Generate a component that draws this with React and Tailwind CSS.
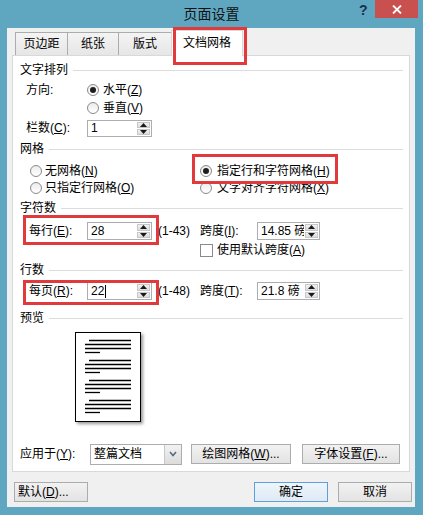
import React from "react";

const K = ({ k }) => <span className="underline">{k}</span>;

function Radio({ checked }) {
  return (
    <span className="flex h-[12px] w-[12px] shrink-0 items-center justify-center rounded-full border border-[#8a8a8a] bg-linear-to-b from-[#ececec] to-white">
      {checked && <span className="h-[6px] w-[6px] rounded-full bg-[#1e1e1e]" />}
    </span>
  );
}

function Check() {
  return <span className="h-[13px] w-[13px] shrink-0 border border-[#8a8a8a] bg-white" />;
}

function Group({ title }) {
  return (
    <div className="flex h-[16px] items-center pl-[7px] pr-[6px]">
      <span>{title}</span>
      <div className="ml-[5px] h-px flex-1 bg-[#dcdcdc]" />
    </div>
  );
}

function Spin({ w, h, children }) {
  return (
    <div className={`flex ${w} ${h} border border-[#abadb3] bg-white`}>
      <div className="flex flex-1 items-center overflow-hidden pl-[3px] whitespace-nowrap">{children}</div>
      <div className="flex w-[15px] flex-col gap-px bg-white p-px">
        <div className="flex flex-1 items-center justify-center border border-[#c8c8c8] bg-linear-to-b from-[#f2f2f2] to-[#dcdcdc]">
          <svg width="7" height="4" viewBox="0 0 7 4"><path d="M0 4 L3.5 0 L7 4 Z" fill="#1a1a1a" /></svg>
        </div>
        <div className="flex flex-1 items-center justify-center border border-[#c8c8c8] bg-linear-to-b from-[#f2f2f2] to-[#dcdcdc]">
          <svg width="7" height="4" viewBox="0 0 7 4"><path d="M0 0 L3.5 4 L7 0 Z" fill="#1a1a1a" /></svg>
        </div>
      </div>
    </div>
  );
}

function Btn({ w, h = "h-[20px]", def, children, extra = "" }) {
  return (
    <div
      className={`flex ${w} ${h} items-center justify-center border ${
        def ? "border-[#5f9fdc] from-[#eef5fc] to-[#dfeaf5]" : "border-[#acacac] from-[#f2f2f2] to-[#e3e3e3]"
      } bg-linear-to-b ${extra}`}
    >
      {children}
    </div>
  );
}

function Preview() {
  const groups = [8, 28, 48, 68];
  return (
    <div className="ml-[62px] mt-[6px] h-[90px] w-[66px] border border-black bg-white shadow-[2px_2px_3px_rgba(0,0,0,0.4)]">
      <svg width="64" height="88" viewBox="0 0 64 88">
        {groups.map((g) => (
          <g key={g} stroke="#000" strokeWidth="1.3">
            <line x1="13" y1={g - 0.5} x2="55" y2={g - 0.5} />
            <line x1="9" y1={g + 3.5} x2="55" y2={g + 3.5} />
            <line x1="9" y1={g + 7.5} x2="55" y2={g + 7.5} />
            <line x1="9" y1={g + 11.5} x2="24" y2={g + 11.5} />
          </g>
        ))}
      </svg>
    </div>
  );
}

export default function App() {
  return (
    <div className="relative flex h-[515px] w-[423px] flex-col overflow-hidden bg-[#5fa7c1] font-['Liberation_Sans','Noto_Sans_CJK_SC',sans-serif] text-[12px] leading-[16px] text-black">
      {/* title bar */}
      <div className="relative flex h-[28px] shrink-0 items-center justify-center">
        <span className="text-[14px] text-[#111]">页面设置</span>
        <div className="absolute left-[359px] top-[2px] text-[14px] font-bold text-[#1d2f4a]">?</div>
        <div className="absolute left-[375px] top-0 flex h-[18px] w-[43px] items-center justify-center bg-[#c8504e]">
          <svg width="10" height="9" viewBox="0 0 10 9">
            <path d="M1 0.5 L9 8.5 M9 0.5 L1 8.5" stroke="#fff" strokeWidth="1.8" />
          </svg>
        </div>
      </div>

      {/* body */}
      <div className="ml-[7px] flex h-[479px] w-[408px] flex-col bg-[#f0f0f0]">
        {/* tabs */}
        <div className="flex h-[27px] items-end pl-[8px]">
          <div className="flex h-[23px] w-[53px] items-center justify-center border border-b-0 border-[#acacac] bg-linear-to-b from-[#f4f4f4] to-[#e6e6e6]">页边距</div>
          <div className="-ml-px flex h-[23px] w-[52px] items-center justify-center border border-b-0 border-[#acacac] bg-linear-to-b from-[#f4f4f4] to-[#e6e6e6]">纸张</div>
          <div className="-ml-px flex h-[23px] w-[54px] items-center justify-center border border-b-0 border-[#acacac] bg-linear-to-b from-[#f4f4f4] to-[#e6e6e6]">版式</div>
          <div className="relative z-10 -mb-px -ml-px flex h-[26px] w-[72px] items-center justify-center border border-b-0 border-[#d9d9d9] bg-white pb-[2px]">文档网格</div>
        </div>

        {/* panel */}
        <div className="mx-[5px] flex h-[417px] flex-col border border-[#d9d9d9] bg-white">
          <div className="mt-[6px]"><Group title="文字排列" /></div>

          <div className="mt-[3px] flex h-[18px] items-center pl-[13px]">
            <span className="w-[61px]">方向:</span>
            <Radio checked />
            <span className="ml-[4px]">水平(<K k="Z" />)</span>
          </div>
          <div className="flex h-[18px] items-center pl-[74px]">
            <Radio />
            <span className="ml-[4px]">垂直(<K k="V" />)</span>
          </div>
          <div className="mt-[2px] flex h-[18px] items-center pl-[13px]">
            <span className="w-[61px]">栏数(<K k="C" />):</span>
            <Spin w="w-[65px]" h="h-[17px]">1</Spin>
          </div>

          <div className="mt-[4px]"><Group title="网格" /></div>

          <div className="mt-[5px] flex h-[17px] items-center">
            <div className="flex w-[187px] items-center pl-[17px]">
              <Radio />
              <span className="ml-[3px]">无网格(<K k="N" />)</span>
            </div>
            <Radio checked />
            <span className="ml-[5px]">指定行和字符网格(<K k="H" />)</span>
          </div>
          <div className="flex h-[17px] items-center">
            <div className="flex w-[187px] items-center pl-[17px]">
              <Radio />
              <span className="ml-[3px]">只指定行网格(<K k="O" />)</span>
            </div>
            <Radio />
            <span className="ml-[5px]">文字对齐字符网格(<K k="X" />)</span>
          </div>

          <div className="mt-[4px]"><Group title="字符数" /></div>

          <div className="mt-[5px] flex h-[20px] items-center">
            <div className="flex w-[187px] items-center pl-[16px]">
              <span className="w-[58px]">每行(<K k="E" />):</span>
              <Spin w="w-[65px]" h="h-[18px]">28</Spin>
              <span className="ml-[6px]">(1-43)</span>
            </div>
            <span className="w-[57px]">跨度(<K k="I" />):</span>
            <Spin w="w-[63px]" h="h-[18px]">14.85 磅</Spin>
          </div>
          <div className="mt-[1px] flex h-[16px] items-center pl-[187px]">
            <Check />
            <span className="ml-[4px]">使用默认跨度(<K k="A" />)</span>
          </div>

          <div className="mt-[4px]"><Group title="行数" /></div>

          <div className="mt-[3px] flex h-[20px] items-center">
            <div className="flex w-[187px] items-center pl-[16px]">
              <span className="w-[58px]">每页(<K k="R" />):</span>
              <Spin w="w-[65px]" h="h-[18px]">
                22<span className="ml-px inline-block h-[13px] w-px bg-black" />
              </Spin>
              <span className="ml-[6px]">(1-48)</span>
            </div>
            <span className="w-[57px]">跨度(<K k="T" />):</span>
            <Spin w="w-[63px]" h="h-[18px]">21.8 磅</Spin>
          </div>

          <div className="mt-[9px]"><Group title="预览" /></div>

          <Preview />

          <div className="mt-[21px] flex h-[22px] items-center pl-[7px]">
            <span className="w-[70px]">应用于(<K k="Y" />):</span>
            <div className="flex h-[21px] w-[92px] border border-[#abadb3] bg-white">
              <div className="flex flex-1 items-center pl-[3px]">整篇文档</div>
              <div className="flex w-[17px] items-center justify-center border-l border-[#c8c8c8] bg-linear-to-b from-[#f2f2f2] to-[#dcdcdc]">
                <svg width="8" height="6" viewBox="0 0 8 6">
                  <path d="M1 1 L4 4.5 L7 1" stroke="#5a6a80" strokeWidth="1.6" fill="none" />
                </svg>
              </div>
            </div>
            <Btn w="w-[100px]" extra="ml-[9px]">绘图网格(<K k="W" />)...</Btn>
            <Btn w="w-[98px]" extra="ml-[11px]">字体设置(<K k="F" />)...</Btn>
          </div>
        </div>

        {/* bottom buttons */}
        <div className="mt-[10px] flex h-[20px] items-center pl-[7px] pr-[3px]">
          <Btn w="w-[74px]" extra="justify-start pl-[3px]">默认(<K k="D" />)...</Btn>
          <div className="flex-1" />
          <Btn w="w-[74px]" def>确定</Btn>
          <Btn w="w-[74px]" extra="ml-[10px]">取消</Btn>
        </div>
      </div>

      {/* red annotation boxes */}
      <div className="pointer-events-none absolute left-[173px] top-[27px] z-20 h-[38px] w-[74px] border-[3px] border-[#e03a3c]" />
      <div className="pointer-events-none absolute left-[192px] top-[154px] z-20 h-[30px] w-[146px] border-[3px] border-[#e03a3c]" />
      <div className="pointer-events-none absolute left-[23px] top-[215px] z-20 h-[30px] w-[136px] border-[3px] border-[#e03a3c]" />
      <div className="pointer-events-none absolute left-[23px] top-[280px] z-20 h-[25px] w-[136px] border-[3px] border-[#e03a3c]" />
    </div>
  );
}
